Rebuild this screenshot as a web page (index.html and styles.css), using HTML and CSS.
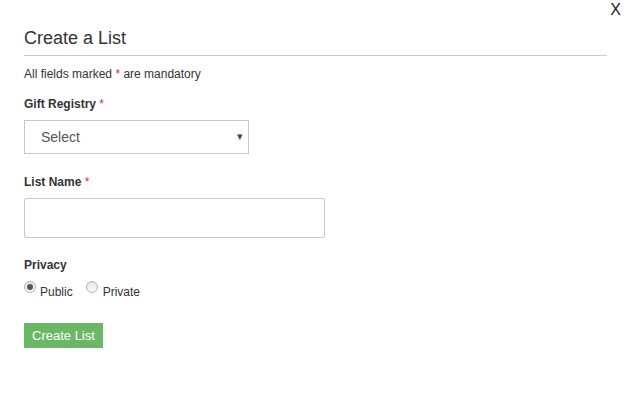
FILE: index.html
```html
<!DOCTYPE html>
<html>
<head>
<meta charset="utf-8">
<link rel="stylesheet" href="styles.css">
</head>
<body>
<div class="modal">
  <span class="close">X</span>
  <h2 class="title">Create a List</h2>
  <p class="note">All fields marked <span class="req">*</span> are mandatory</p>
  <div class="field field-registry">
    <label class="label">Gift Registry <span class="req">*</span></label>
    <div class="select">
      <span class="select-text">Select</span>
      <span class="caret">&#9662;</span>
    </div>
  </div>
  <div class="field field-name">
    <label class="label">List Name <span class="req">*</span></label>
    <input class="input" type="text">
  </div>
  <div class="field field-privacy">
    <label class="label">Privacy</label>
    <div class="radios">
      <label class="radio"><input type="radio" name="p" checked><span>Public</span></label>
      <label class="radio"><input type="radio" name="p"><span>Private</span></label>
    </div>
  </div>
  <button class="btn">Create List</button>
</div>
</body>
</html>
```
FILE: styles.css
```css
html, body { margin: 0; padding: 0; background: #fff; }
body { font-family: "Liberation Sans", Arial, sans-serif; color: #333; }
.modal { position: relative; padding: 27px 23px 0 24px; }
.close { position: absolute; top: 1px; right: 9px; font-size: 16px; line-height: 18px; color: #222; }
.title { margin: 0; font-size: 18px; line-height: 22px; font-weight: normal; color: #333; padding-bottom: 6px; border-bottom: 1px solid #ccc; }
.note { margin: 10px 0 0; font-size: 12px; line-height: 16px; }
.req { color: #e4262b; }
.field { display: flex; flex-direction: column; align-items: flex-start; }
.field-registry { margin-top: 14px; }
.field-name { margin-top: 20px; }
.field-privacy { margin-top: 19px; }
.label { display: block; font-size: 12px; line-height: 16px; font-weight: bold; margin-bottom: 8px; }
.label .req { font-weight: normal; }
.select { box-sizing: border-box; width: 225px; height: 34px; border: 1px solid #c8c8c8; display: flex; align-items: center; justify-content: space-between; padding: 0 5px 0 16px; }
.select-text { font-size: 14px; color: #555; }
.caret { font-size: 11px; color: #444; margin-top: -2px; }
.input { box-sizing: border-box; width: 301px; height: 40px; border: 1px solid #c8c8c8; border-radius: 2px; margin: 0; padding: 0 8px; }
.radios { display: flex; gap: 13px; }
.radio { display: flex; align-items: flex-start; font-size: 12px; line-height: 16px; }
.radio input { appearance: none; -webkit-appearance: none; box-sizing: border-box; width: 12px; height: 12px; margin: 0 4px 0 0; border-radius: 50%; border: 1px solid #b5b5b5; background: linear-gradient(#e6e6e6, #fafafa); position: relative; }
.radio input:checked::after { content: ""; position: absolute; left: 2px; top: 2px; width: 6px; height: 6px; border-radius: 50%; background: #555; }
.radio span { margin-top: 3px; }
.radio + .radio input { margin-right: 5px; }
.btn { margin-top: 23px; font-family: "Liberation Sans", Arial, sans-serif; font-size: 13px; line-height: 15px; color: #fff; background: #6ab865; border: 0; padding: 5px 8px; height: 25px; }
```
